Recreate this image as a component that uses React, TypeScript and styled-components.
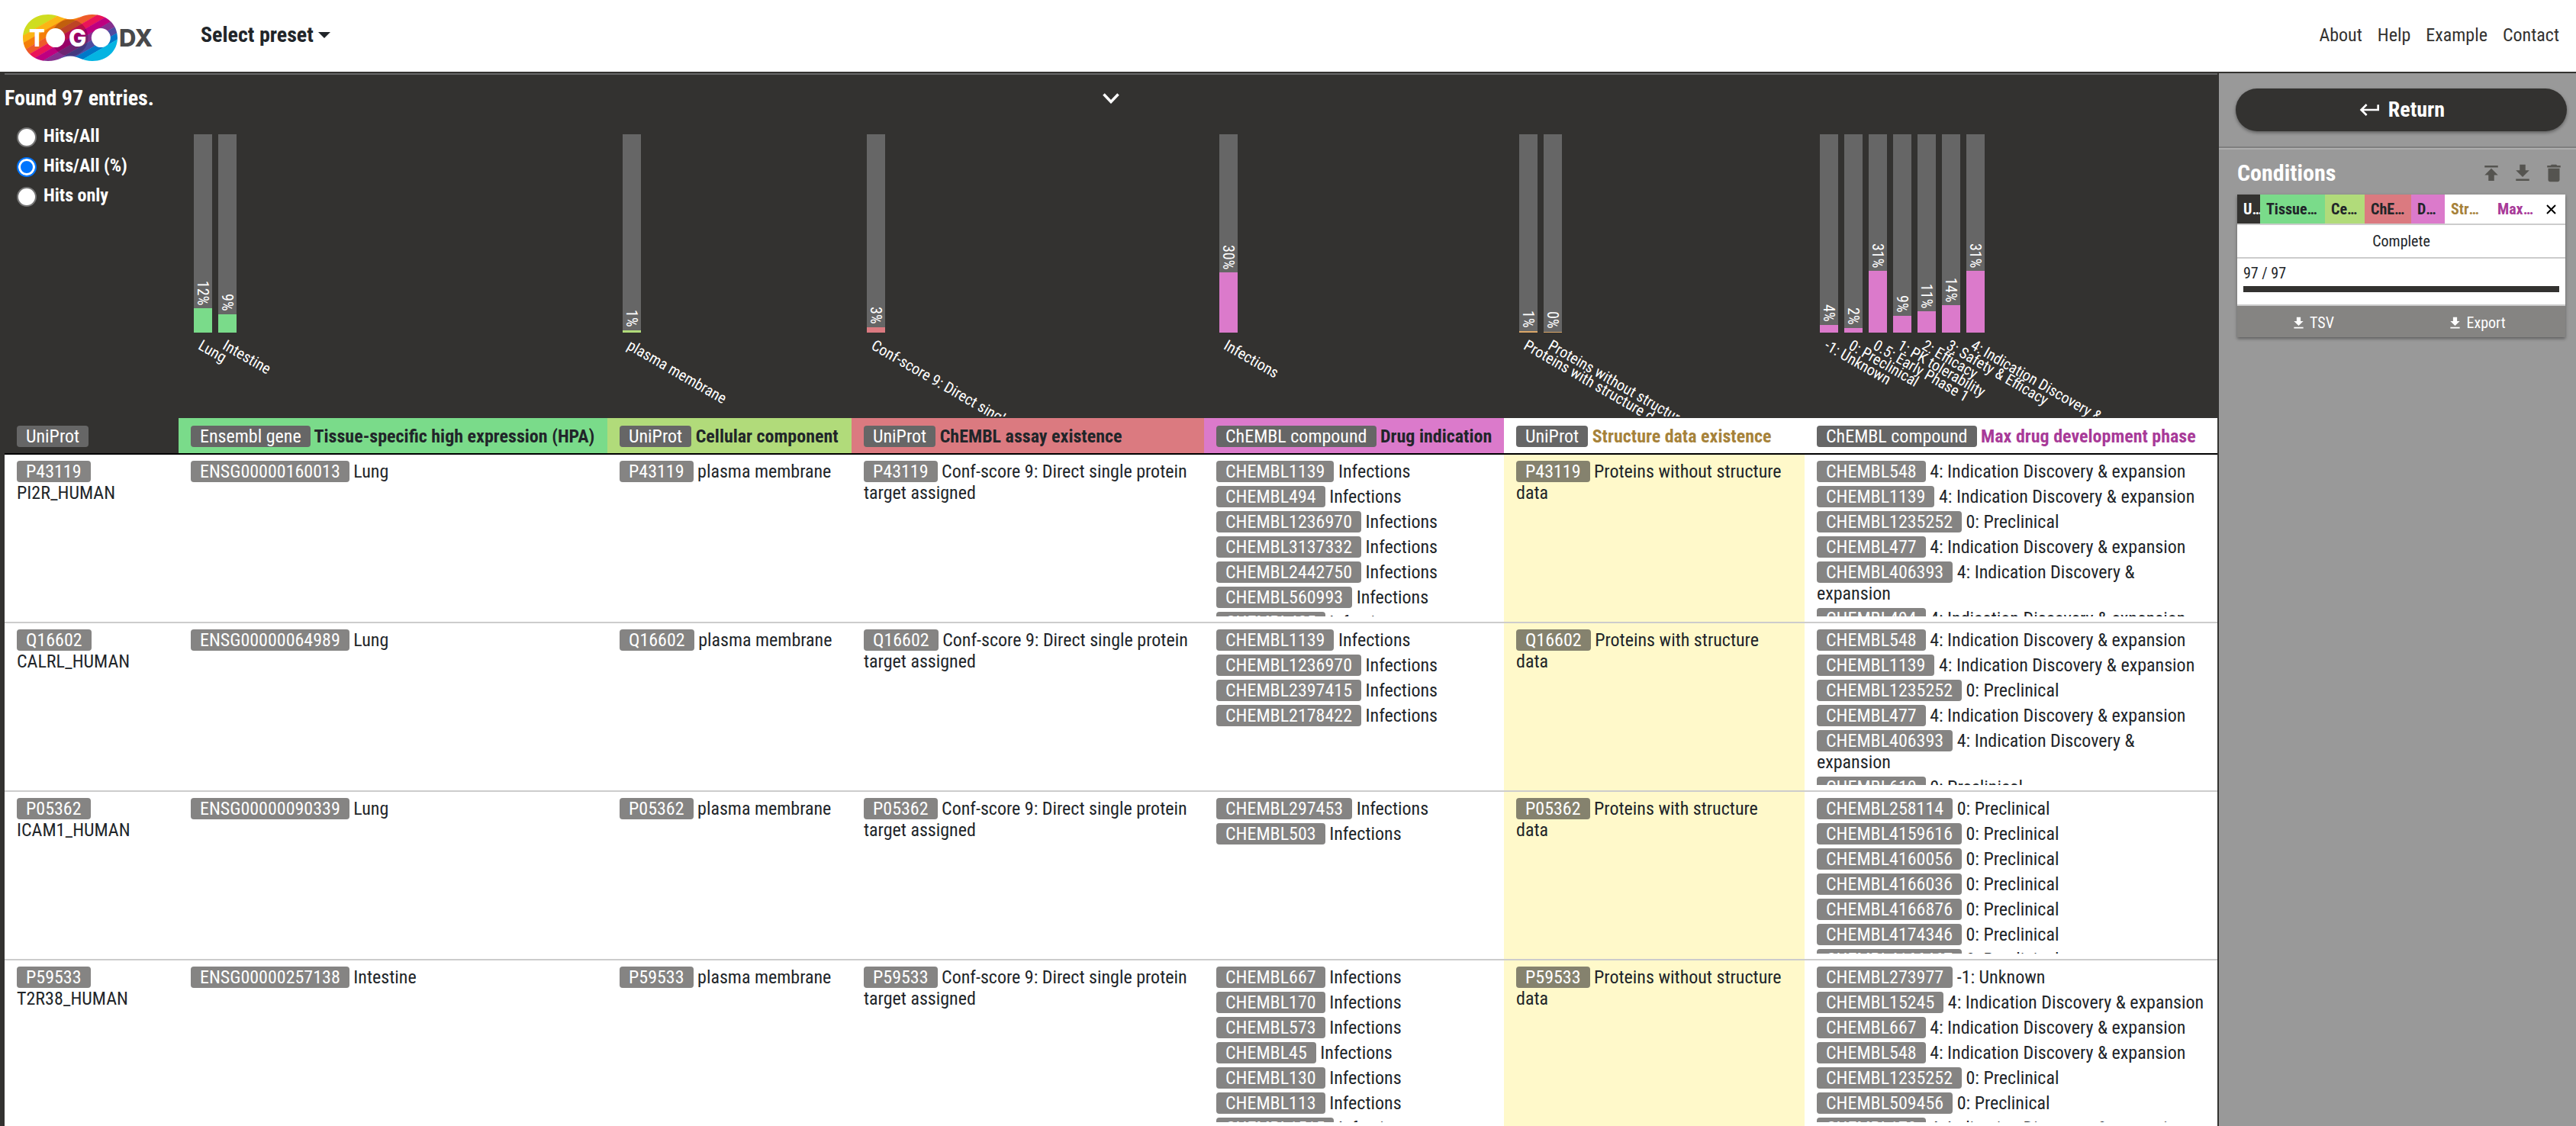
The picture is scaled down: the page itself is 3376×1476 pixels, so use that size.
import React, { useState } from "react";
import styled, { createGlobalStyle } from "styled-components";

const INK = "#212529";
const DARK = "#333230";
const GREEN = "#7adb8a";
const LIME = "#b1db7a";
const CORAL = "#db7a80";
const PINK = "#db7acb";
const AMBER = "#dba769";

const GlobalStyle = createGlobalStyle`
  *, *::before, *::after { box-sizing: border-box; }
  html, body, #root { height: 100%; }
  body {
    margin: 0;
    overflow: hidden;
    color: ${INK};
    background: #fff;
    font-family: "Roboto Condensed", Roboto, "Liberation Sans", sans-serif;
    font-size: 24px;
    line-height: 28px;
  }
  button, select, input { font: inherit; color: inherit; }
  button, select { cursor: pointer; padding: 0; border: 0; background: none; }
  ul { list-style: none; margin: 0; padding: 0; }
`;

const Page = styled.div`
  display: flex;
  flex-direction: column;
  height: 100vh;
`;

/* ---------- Header ---------- */

const Header = styled.header`
  display: flex;
  align-items: center;
  flex: none;
  height: 96px;
  padding: 0 22px 3px 20px;
  border-bottom: 2px solid ${DARK};
  background: #fff;
`;

const LogoLink = styled.a`
  display: flex;
  margin-right: 59px;
`;

const PresetPicker = styled.label`
  display: flex;
  align-items: center;
  gap: 6px;
`;

const PresetSelect = styled.select`
  appearance: none;
  height: 36px;
  font-size: 28px;
  font-weight: 700;
  outline: none;
`;

const Nav = styled.nav`
  display: flex;
  gap: 20px;
  margin-left: auto;
`;

const NavLink = styled.a`
  color: ${DARK};
  text-decoration: none;
`;

/* ---------- Body ---------- */

const Body = styled.div`
  display: flex;
  flex: 1;
  min-height: 0;
`;

const Results = styled.main`
  flex: 1;
  min-width: 0;
  padding-left: 6px;
  overflow: hidden;
  background: ${DARK};
`;

const Summary = styled.div`
  display: grid;
  grid-template-columns: 1fr auto 1fr;
  align-items: center;
  height: 60px;
  padding-top: 3px;
  border-top: 2px solid #666;
  color: #fff;
`;

const Found = styled.h1`
  margin: 0;
  font-size: 28px;
  line-height: 32px;
`;

const CollapseButton = styled.button`
  display: flex;
  padding: 4px;
`;

const Table = styled.table`
  width: 100%;
  table-layout: fixed;
  border-collapse: separate;
  border-spacing: 0;
  background: #fff;
`;

const Column = styled.col<{ $width: number }>`
  width: ${(p) => p.$width}px;
`;

const StatCell = styled.th`
  padding: 0 0 2px;
  background: ${DARK};
  color: #fff;
  font-weight: 400;
  text-align: left;
  vertical-align: top;
`;

const ModeList = styled.div`
  padding: 3px 0 0 16px;
`;

const ModeOption = styled.label`
  display: flex;
  align-items: center;
  gap: 9px;
  font-weight: 700;
  line-height: 39px;
`;

const Radio = styled.input`
  appearance: none;
  width: 26px;
  height: 26px;
  margin: 2px 0 0;
  border: 2px solid #767676;
  border-radius: 50%;
  background: #fff;

  &:checked {
    border-color: #0075ff;
    background: #0075ff;
    box-shadow: inset 0 0 0 3px #fff;
  }
`;

const Chart = styled.div`
  display: flex;
  gap: 8px;
  height: 390px;
  padding: 20px 20px 0;
  overflow-x: visible;
  overflow-y: clip;
`;

const Bar = styled.div`
  position: relative;
  display: flex;
  flex-direction: column;
  justify-content: flex-end;
  flex: none;
  width: 24px;
  height: 260px;
  background: #666;
`;

const BarValue = styled.span`
  padding-bottom: 4px;
  font-size: 20px;
  line-height: 24px;
  writing-mode: vertical-rl;
  text-align: right;
`;

const BarFill = styled.div<{ $color: string }>`
  flex: none;
  background: ${(p) => p.$color};
`;

const BarLabel = styled.span`
  position: absolute;
  top: 266px;
  left: 13px;
  font-size: 20px;
  line-height: 20px;
  white-space: nowrap;
  transform: rotate(30deg);
  transform-origin: 0 0;
`;

const HeadCell = styled.th<{ $fill: string; $ink: string }>`
  height: 48px;
  padding: 10px 0 8px 16px;
  border-bottom: 2px solid #000;
  background: ${(p) => p.$fill};
  color: ${(p) => p.$ink};
  text-align: left;
  white-space: nowrap;
`;

const Badge = styled.span<{ $solid?: boolean }>`
  display: inline-block;
  padding: 0 12px;
  border-radius: 4px;
  background: ${(p) => (p.$solid ? "#666" : "rgba(51, 50, 48, 0.6)")};
  color: #fff;
  font-weight: 400;
  vertical-align: top;
`;

const Cell = styled.td<{ $marked?: boolean }>`
  padding: 8px 16px 7px;
  border-bottom: 2px solid #ccc;
  background: ${(p) => (p.$marked ? "#fff9ca" : "#fff")};
  vertical-align: top;
`;

const Items = styled.ul`
  height: 204px;
  overflow: hidden;
`;

const Item = styled.li`
  padding-bottom: 5px;
`;

const EntryName = styled.div`
  white-space: nowrap;
`;

/* ---------- Sidebar ---------- */

const Sidebar = styled.aside`
  flex: none;
  width: 470px;
  border-left: 2px solid ${DARK};
  background: #999;
`;

const ReturnArea = styled.div`
  padding: 20px 12px 20px 22px;
  border-bottom: 2px solid #7f7f7f;
`;

const ReturnButton = styled.button`
  display: flex;
  align-items: center;
  justify-content: center;
  gap: 8px;
  width: 100%;
  height: 56px;
  border-radius: 28px;
  background: ${DARK};
  box-shadow: 0 2px 4px rgba(0, 0, 0, 0.4);
  color: #fff;
  font-size: 28px;
  font-weight: 700;
`;

const Conditions = styled.section`
  padding: 0 14px 0 24px;
  border-top: 2px solid #adadad;
`;

const ConditionsHead = styled.div`
  display: flex;
  align-items: center;
  gap: 11px;
  height: 59px;
  padding-top: 3px;
`;

const ConditionsTitle = styled.h2`
  flex: 1;
  margin: 0;
  color: #fff;
  font-size: 30px;
  line-height: 36px;
`;

const IconButton = styled.button`
  display: flex;
  color: #555450;
`;

const Card = styled.div`
  background: #fff;
  box-shadow: 0 2px 4px rgba(0, 0, 0, 0.4);
  font-size: 20px;
  line-height: 24px;
`;

const Segments = styled.div`
  display: flex;
`;

const Segment = styled.span<{ $basis: number; $fill: string; $ink: string }>`
  flex: 1 1 ${(p) => p.$basis}px;
  min-width: 0;
  padding: 0 8px;
  overflow: hidden;
  background: ${(p) => p.$fill};
  color: ${(p) => p.$ink};
  font-weight: 700;
  line-height: 38px;
  text-overflow: ellipsis;
  white-space: nowrap;

  &:last-of-type {
    padding-right: 0;
  }
`;

const CloseButton = styled.button`
  display: flex;
  align-items: center;
  justify-content: center;
  flex: none;
  width: 38px;
`;

const Status = styled.div`
  border-top: 2px solid #ccc;
  line-height: 42px;
  text-align: center;
`;

const Progress = styled.div`
  padding: 7px 8px 16px;
  border-top: 2px solid #ccc;
`;

const ProgressTrack = styled.div`
  height: 8px;
  margin-top: 5px;
  background: #ccc;
`;

const ProgressFill = styled.div`
  height: 100%;
  background: ${DARK};
`;

const Downloads = styled.div`
  display: grid;
  grid-template-columns: 1fr 1fr;
  border-top: 2px solid #ccc;
  background: #858482;
`;

const DownloadButton = styled.button`
  display: flex;
  align-items: center;
  justify-content: center;
  gap: 4px;
  height: 41px;
  padding: 3px 18px 0 0;
  color: #fff;
`;

/* ---------- Drawings ---------- */

const STRIPES = ["#cfdd20", "#fbb515", "#f47e0a", "#ee5a2a", "#ea1458", "#be0080", "#86308f", "#4e4ba0", "#0078c8", "#04b4e2"];
const STRIPE_EDGES = [-40, 36, 44.5, 53, 61, 69, 77.5, 86, 94.5, 102, 180];
const BLOB =
  "M43 8C57 8 62 14.300 72 14.300S88 8 101 8C120 8 134 21 134 38.500S120 69 101 69C88 69 82 62.500 72 62.500S57 69 43 69C24 69 10 56 10 38.500S24 8 43 8Z";

function Logo() {
  return (
    <svg width="184" height="70" viewBox="0 0 184 70" role="img" aria-label="TogoDX">
      <clipPath id="blob">
        <path d={BLOB} />
      </clipPath>
      <g clipPath="url(#blob)">
        <g transform="rotate(-30)">
          {STRIPES.map((color, i) => (
            <rect key={color} x="-80" y={STRIPE_EDGES[i]} width="300" height={STRIPE_EDGES[i + 1] - STRIPE_EDGES[i] + 0.3} fill={color} />
          ))}
        </g>
        <circle cx="71.500" cy="38.500" r="24" fill="#200018" opacity="0.24" />
      </g>
      <g fontFamily="Inter, sans-serif" fontWeight="800" fontSize="31">
        <text x="18" y="50" fill="#fff">T</text>
        <text x="70" y="50" fill="#fff">G</text>
        <text x="136" y="50" fill="#48494b">DX</text>
      </g>
      <circle cx="52.700" cy="38.600" r="12.500" fill="#fff" />
      <circle cx="112.300" cy="38.600" r="12.500" fill="#fff" />
    </svg>
  );
}

const ICONS = {
  publish: "M5 4v2h14V4H5zm0 10h4v6h6v-6h4l-7-7-7 7z",
  download: "M19 9h-4V3H9v6H5l7 7 7-7zM5 18v2h14v-2H5z",
  trash: "M6 19c0 1.100.9 2 2 2h8c1.100 0 2-.9 2-2V7H6v12zM19 4h-3.500l-1-1h-5l-1 1H5v2h14V4z",
  enter: "M19 7v4H5.830l3.580-3.590L8 6l-6 6 6 6 1.410-1.410L5.830 13H21V7z",
};

function Icon({ name, size }: { name: keyof typeof ICONS; size: number }) {
  return (
    <svg width={size} height={size} viewBox="0 0 24 24" fill="currentColor" aria-hidden="true">
      <path d={ICONS[name]} />
    </svg>
  );
}

/* ---------- Data ---------- */

type BarData = { label: string; value: number; height: number };
type ColumnData = {
  width: number;
  source: string;
  title: string;
  short: number;
  fill: string;
  ink: string;
  barColor: string;
  bars: BarData[];
};

const COLUMNS: ColumnData[] = [
  { width: 228, source: "UniProt", title: "", short: 30, fill: DARK, ink: "#fff", barColor: DARK, bars: [] },
  {
    width: 562, source: "Ensembl gene", title: "Tissue-specific high expression (HPA)", short: 85, fill: GREEN, ink: INK, barColor: GREEN,
    bars: [{ label: "Lung", value: 12, height: 32 }, { label: "Intestine", value: 9, height: 24 }],
  },
  {
    width: 320, source: "UniProt", title: "Cellular component", short: 52, fill: LIME, ink: INK, barColor: LIME,
    bars: [{ label: "plasma membrane", value: 1, height: 3 }],
  },
  {
    width: 462, source: "UniProt", title: "ChEMBL assay existence", short: 61, fill: CORAL, ink: INK, barColor: CORAL,
    bars: [{ label: "Conf-score 9: Direct single protein target assigned", value: 3, height: 7 }],
  },
  {
    width: 393, source: "ChEMBL compound", title: "Drug indication", short: 44, fill: PINK, ink: INK, barColor: PINK,
    bars: [{ label: "Infections", value: 30, height: 79 }],
  },
  {
    width: 394, source: "UniProt", title: "Structure data existence", short: 61, fill: "#fff", ink: "#a6823a", barColor: AMBER,
    bars: [{ label: "Proteins with structure data", value: 1, height: 2 }, { label: "Proteins without structure data", value: 0, height: 1 }],
  },
  {
    width: 541, source: "ChEMBL compound", title: "Max drug development phase", short: 59, fill: "#fff", ink: "#a83a98", barColor: PINK,
    bars: [
      { label: "-1: Unknown", value: 4, height: 10 },
      { label: "0: Preclinical", value: 2, height: 6 },
      { label: "0.5: Early Phase 1", value: 31, height: 81 },
      { label: "1: PK tolerability", value: 9, height: 22 },
      { label: "2: Efficacy", value: 11, height: 28 },
      { label: "3: Safety & Efficacy", value: 14, height: 36 },
      { label: "4: Indication Discovery & expansion", value: 31, height: 81 },
    ],
  },
];

const PHASES: Record<string, string> = {
  "4": "4: Indication Discovery & expansion",
  "0": "0: Preclinical",
  "-1": "-1: Unknown",
};

type Entry = {
  id: string;
  name: string;
  gene: string;
  tissue: string;
  structure: string;
  drugs: number[];
  phases: [number, string][];
};

const ENTRIES: Entry[] = [
  {
    id: "P43119", name: "PI2R_HUMAN", gene: "ENSG00000160013", tissue: "Lung", structure: "Proteins without structure data",
    drugs: [1139, 494, 1236970, 3137332, 2442750, 560993, 485],
    phases: [[548, "4"], [1139, "4"], [1235252, "0"], [477, "4"], [406393, "4"], [494, "4"]],
  },
  {
    id: "Q16602", name: "CALRL_HUMAN", gene: "ENSG00000064989", tissue: "Lung", structure: "Proteins with structure data",
    drugs: [1139, 1236970, 2397415, 2178422],
    phases: [[548, "4"], [1139, "4"], [1235252, "0"], [477, "4"], [406393, "4"], [610, "0"]],
  },
  {
    id: "P05362", name: "ICAM1_HUMAN", gene: "ENSG00000090339", tissue: "Lung", structure: "Proteins with structure data",
    drugs: [297453, 503],
    phases: [[258114, "0"], [4159616, "0"], [4160056, "0"], [4166036, "0"], [4166876, "0"], [4174346, "0"], [4166467, "0"]],
  },
  {
    id: "P59533", name: "T2R38_HUMAN", gene: "ENSG00000257138", tissue: "Intestine", structure: "Proteins without structure data",
    drugs: [667, 170, 573, 45, 130, 113, 1515],
    phases: [[273977, "-1"], [15245, "4"], [667, "4"], [548, "4"], [1235252, "0"], [509456, "0"], [170, "4"]],
  },
];

const MODES = ["Hits/All", "Hits/All (%)", "Hits only"];

function Values({ items, marked }: { items: [string, string][]; marked?: boolean }) {
  return (
    <Cell $marked={marked}>
      <Items>
        {items.map(([id, text]) => (
          <Item key={id}>
            <Badge>{id}</Badge> {text}
          </Item>
        ))}
      </Items>
    </Cell>
  );
}

export default function App() {
  const [mode, setMode] = useState(MODES[1]);
  const done = 97;
  const total = 97;

  return (
    <Page>
      <GlobalStyle />
      <Header>
        <LogoLink href="#">
          <Logo />
        </LogoLink>
        <PresetPicker>
          <PresetSelect aria-label="Select preset">
            <option>Select preset</option>
          </PresetSelect>
          <svg width="16" height="8" viewBox="0 0 16 8" fill={INK} aria-hidden="true">
            <path d="M0 0h16L8 8z" />
          </svg>
        </PresetPicker>
        <Nav>
          {["About", "Help", "Example", "Contact"].map((item) => (
            <NavLink key={item} href="#">
              {item}
            </NavLink>
          ))}
        </Nav>
      </Header>

      <Body>
        <Results>
          <Summary>
            <Found>Found {total} entries.</Found>
            <CollapseButton aria-label="Collapse statistics">
              <svg width="22" height="14" viewBox="0 0 22 14" fill="none" stroke="currentColor" strokeWidth="3.500" aria-hidden="true">
                <path d="M1.500 1.500L11 11.500L20.500 1.500" />
              </svg>
            </CollapseButton>
          </Summary>

          <Table>
            <colgroup>
              {COLUMNS.map((column, i) => (
                <Column key={i} $width={column.width} />
              ))}
            </colgroup>
            <thead>
              <tr>
                <StatCell>
                  <ModeList role="radiogroup" aria-label="Statistics mode">
                    {MODES.map((item) => (
                      <ModeOption key={item}>
                        <Radio type="radio" name="mode" checked={mode === item} onChange={() => setMode(item)} />
                        {item}
                      </ModeOption>
                    ))}
                  </ModeList>
                </StatCell>
                {COLUMNS.slice(1).map((column) => (
                  <StatCell key={column.title}>
                    <Chart>
                      {column.bars.map((bar) => (
                        <Bar key={bar.label}>
                          <BarValue>{bar.value}%</BarValue>
                          <BarFill $color={column.barColor} style={{ height: bar.height }} />
                          <BarLabel>{bar.label}</BarLabel>
                        </Bar>
                      ))}
                    </Chart>
                  </StatCell>
                ))}
              </tr>
              <tr>
                {COLUMNS.map((column) => (
                  <HeadCell key={column.title} $fill={column.fill} $ink={column.ink}>
                    <Badge $solid>{column.source}</Badge> {column.title}
                  </HeadCell>
                ))}
              </tr>
            </thead>
            <tbody>
              {ENTRIES.map((entry) => (
                <tr key={entry.id}>
                  <Cell>
                    <Badge>{entry.id}</Badge>
                    <EntryName>{entry.name}</EntryName>
                  </Cell>
                  <Values items={[[entry.gene, entry.tissue]]} />
                  <Values items={[[entry.id, "plasma membrane"]]} />
                  <Values items={[[entry.id, "Conf-score 9: Direct single protein target assigned"]]} />
                  <Values items={entry.drugs.map((n) => [`CHEMBL${n}`, "Infections"])} />
                  <Values marked items={[[entry.id, entry.structure]]} />
                  <Values items={entry.phases.map(([n, phase]) => [`CHEMBL${n}`, PHASES[phase]])} />
                </tr>
              ))}
            </tbody>
          </Table>
        </Results>

        <Sidebar>
          <ReturnArea>
            <ReturnButton>
              <Icon name="enter" size={32} />
              Return
            </ReturnButton>
          </ReturnArea>
          <Conditions>
            <ConditionsHead>
              <ConditionsTitle>Conditions</ConditionsTitle>
              <IconButton aria-label="Upload conditions">
                <Icon name="publish" size={30} />
              </IconButton>
              <IconButton aria-label="Download conditions">
                <Icon name="download" size={30} />
              </IconButton>
              <IconButton aria-label="Delete conditions">
                <Icon name="trash" size={30} />
              </IconButton>
            </ConditionsHead>
            <Card>
              <Segments>
                {COLUMNS.map((column) => (
                  <Segment key={column.title} $basis={column.short} $fill={column.fill} $ink={column.ink}>
                    {column.title || column.source}
                  </Segment>
                ))}
                <CloseButton aria-label="Remove condition">
                  <svg width="13" height="13" viewBox="0 0 13 13" stroke="#000" strokeWidth="2" aria-hidden="true">
                    <path d="M1 1l11 11M12 1L1 12" />
                  </svg>
                </CloseButton>
              </Segments>
              <Status>Complete</Status>
              <Progress>
                {done} / {total}
                <ProgressTrack role="progressbar" aria-label="Loaded entries" aria-valuenow={done} aria-valuemax={total}>
                  <ProgressFill style={{ width: `${(done / total) * 100}%` }} />
                </ProgressTrack>
              </Progress>
              <Downloads>
                <DownloadButton>
                  <Icon name="download" size={21} />
                  TSV
                </DownloadButton>
                <DownloadButton>
                  <Icon name="download" size={21} />
                  Export
                </DownloadButton>
              </Downloads>
            </Card>
          </Conditions>
        </Sidebar>
      </Body>
    </Page>
  );
}
